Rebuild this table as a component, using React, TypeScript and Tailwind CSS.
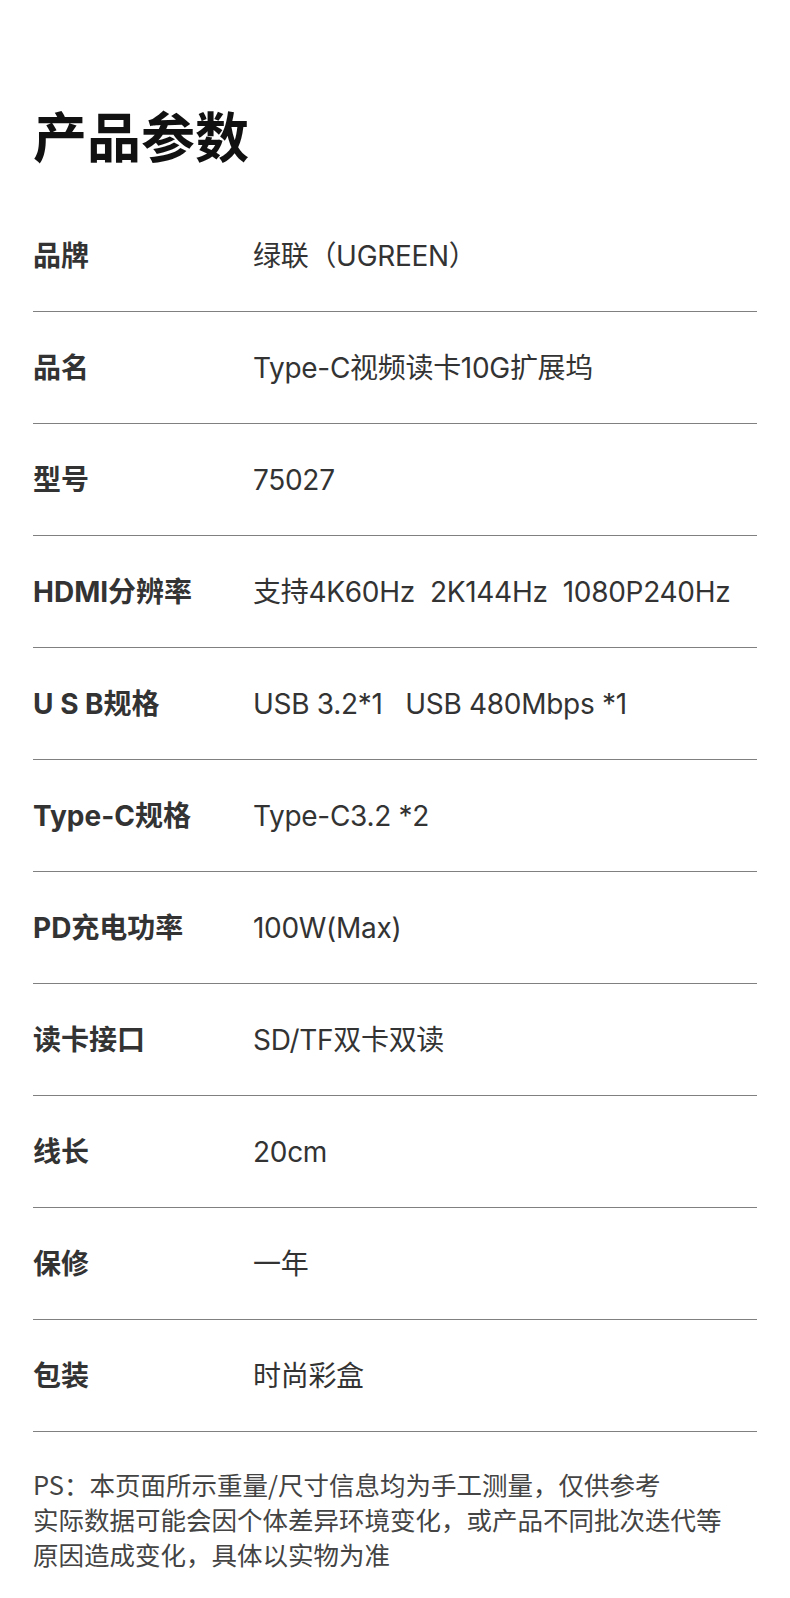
import React from "react";

const rows: [string, string][] = [
  ["品牌", "绿联（UGREEN）"],
  ["品名", "Type-C视频读卡10G扩展坞"],
  ["型号", "75027"],
  ["HDMI分辨率", "支持4K60Hz\u00a0\u00a02K144Hz\u00a0\u00a01080P240Hz"],
  ["U S B规格", "USB 3.2*1\u00a0\u00a0\u00a0USB 480Mbps *1"],
  ["Type-C规格", "Type-C3.2 *2"],
  ["PD充电功率", "100W(Max)"],
  ["读卡接口", "SD/TF双卡双读"],
  ["线长", "20cm"],
  ["保修", "一年"],
  ["包装", "时尚彩盒"],
];

export default function App() {
  return (
    <div
      className="w-[790px] min-h-[1598px] bg-white px-[33px]"
      style={{ fontFamily: '"Noto Sans CJK SC", "Noto Sans", sans-serif' }}
    >
      <h1 className="pt-[108px] text-[54px] leading-[54px] font-bold text-[#111]">产品参数</h1>
      <div className="mt-[38px]">
        {rows.map(([k, v]) => (
          <div key={k} className="flex h-[112px] items-center border-b border-[#808080]">
            <div className="w-[220px] shrink-0 text-[28px] font-bold text-[#333] font-['Inter','Noto_Sans_CJK_SC',sans-serif]">
              {k}
            </div>
            <div className="text-[28px] text-[#333] tracking-[-0.3px] font-['Inter','Noto_Sans_CJK_SC',sans-serif]">
              {v}
            </div>
          </div>
        ))}
      </div>
      <div className="pt-[34px] text-[25.5px] leading-[35px] text-[#444]">
        <p>PS：本页面所示重量/尺寸信息均为手工测量，仅供参考</p>
        <p>实际数据可能会因个体差异环境变化，或产品不同批次迭代等</p>
        <p>原因造成变化，具体以实物为准</p>
      </div>
    </div>
  );
}
